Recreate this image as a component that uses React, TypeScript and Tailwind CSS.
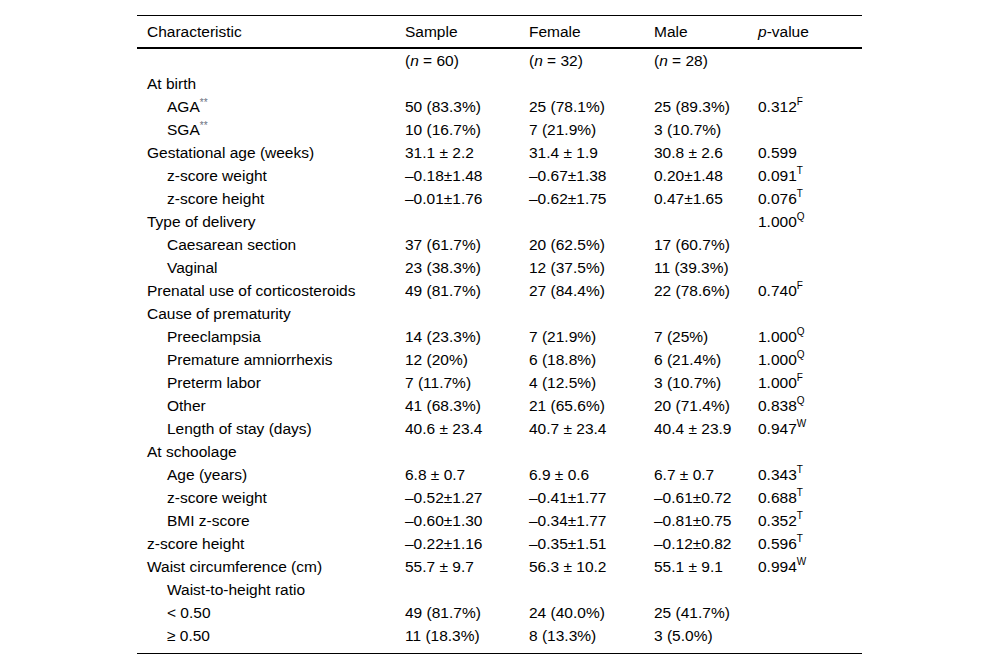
import React from "react";

type Row = {
  label: React.ReactNode;
  indent?: number;
  cells: React.ReactNode[];
};

const Sup = ({ c }: { c: string }) => (
  <sup className="text-[10px] relative -top-[1px] align-super leading-none">{c}</sup>
);

const P = ({ v, s }: { v: string; s?: string }) => (
  <span>
    {v}
    {s ? <Sup c={s} /> : null}
  </span>
);

const N = ({ n }: { n: number }) => (
  <span>
    (<i>n</i> = {n})
  </span>
);

const A = ({ t }: { t: string }) => (
  <span>
    {t}
    <span className="text-[10px] text-gray-500 align-super leading-none">**</span>
  </span>
);

const rows: Row[] = [
  { label: "", cells: [<N n={60} />, <N n={32} />, <N n={28} />, ""] },
  { label: "At birth", cells: ["", "", "", ""] },
  { label: <A t="AGA" />, indent: 1, cells: ["50 (83.3%)", "25 (78.1%)", "25 (89.3%)", <P v="0.312" s="F" />] },
  { label: <A t="SGA" />, indent: 1, cells: ["10 (16.7%)", "7 (21.9%)", "3 (10.7%)", ""] },
  { label: "Gestational age (weeks)", cells: ["31.1 ± 2.2", "31.4 ± 1.9", "30.8 ± 2.6", <P v="0.599" />] },
  { label: "z-score weight", indent: 1, cells: ["–0.18±1.48", "–0.67±1.38", "0.20±1.48", <P v="0.091" s="T" />] },
  { label: "z-score height", indent: 1, cells: ["–0.01±1.76", "–0.62±1.75", "0.47±1.65", <P v="0.076" s="T" />] },
  { label: "Type of delivery", cells: ["", "", "", <P v="1.000" s="Q" />] },
  { label: "Caesarean section", indent: 1, cells: ["37 (61.7%)", "20 (62.5%)", "17 (60.7%)", ""] },
  { label: "Vaginal", indent: 1, cells: ["23 (38.3%)", "12 (37.5%)", "11 (39.3%)", ""] },
  { label: "Prenatal use of corticosteroids", cells: ["49 (81.7%)", "27 (84.4%)", "22 (78.6%)", <P v="0.740" s="F" />] },
  { label: "Cause of prematurity", cells: ["", "", "", ""] },
  { label: "Preeclampsia", indent: 1, cells: ["14 (23.3%)", "7 (21.9%)", "7 (25%)", <P v="1.000" s="Q" />] },
  { label: "Premature amniorrhexis", indent: 1, cells: ["12 (20%)", "6 (18.8%)", "6 (21.4%)", <P v="1.000" s="Q" />] },
  { label: "Preterm labor", indent: 1, cells: ["7 (11.7%)", "4 (12.5%)", "3 (10.7%)", <P v="1.000" s="F" />] },
  { label: "Other", indent: 1, cells: ["41 (68.3%)", "21 (65.6%)", "20 (71.4%)", <P v="0.838" s="Q" />] },
  { label: "Length of stay (days)", indent: 1, cells: ["40.6 ± 23.4", "40.7 ± 23.4", "40.4 ± 23.9", <P v="0.947" s="W" />] },
  { label: "At schoolage", cells: ["", "", "", ""] },
  { label: "Age (years)", indent: 1, cells: ["6.8 ± 0.7", "6.9 ± 0.6", "6.7 ± 0.7", <P v="0.343" s="T" />] },
  { label: "z-score weight", indent: 1, cells: ["–0.52±1.27", "–0.41±1.77", "–0.61±0.72", <P v="0.688" s="T" />] },
  { label: "BMI z-score", indent: 1, cells: ["–0.60±1.30", "–0.34±1.77", "–0.81±0.75", <P v="0.352" s="T" />] },
  { label: "z-score height", cells: ["–0.22±1.16", "–0.35±1.51", "–0.12±0.82", <P v="0.596" s="T" />] },
  { label: "Waist circumference (cm)", cells: ["55.7 ± 9.7", "56.3 ± 10.2", "55.1 ± 9.1", <P v="0.994" s="W" />] },
  { label: "Waist-to-height ratio", indent: 1, cells: ["", "", "", ""] },
  { label: "< 0.50", indent: 1, cells: ["49 (81.7%)", "24 (40.0%)", "25 (41.7%)", ""] },
  { label: "≥ 0.50", indent: 1, cells: ["11 (18.3%)", "8 (13.3%)", "3 (5.0%)", ""] },
];

export default function App() {
  const th = "text-left font-normal pl-[10px] pr-0 py-0 h-[32px] leading-[31px] align-middle";
  return (
    <div className="w-[1000px] h-[668px] bg-white text-black font-['Liberation_Sans',Arial,sans-serif] text-[15.5px]">
      <div className="pt-[15px] pl-[137px]">
        <table className="w-[725px] border-collapse table-fixed">
          <colgroup>
            <col className="w-[258px]" />
            <col className="w-[124px]" />
            <col className="w-[125px]" />
            <col className="w-[104px]" />
            <col className="w-[114px]" />
          </colgroup>
          <thead>
            <tr className="border-t border-black border-b-2">
              <th className={th}>Characteristic</th>
              <th className={th}>Sample</th>
              <th className={th}>Female</th>
              <th className={th}>Male</th>
              <th className={th}>
                <i>p</i>-value
              </th>
            </tr>
          </thead>
          <tbody>
            {rows.map((r, i) => {
              const last = i === rows.length - 1;
              const base = "pr-0 pt-0 whitespace-nowrap leading-[23px] align-top " + (last ? "pb-[6px] " : "pb-0 ");
              return (
                <tr key={i} className={last ? "border-b border-black" : ""}>
                  <td className={base + (r.indent ? "pl-[30px]" : "pl-[10px]")}>{r.label}</td>
                  {r.cells.map((c, j) => (
                    <td key={j} className={base + "pl-[10px]"}>
                      {c}
                    </td>
                  ))}
                </tr>
              );
            })}
          </tbody>
        </table>
      </div>
    </div>
  );
}
